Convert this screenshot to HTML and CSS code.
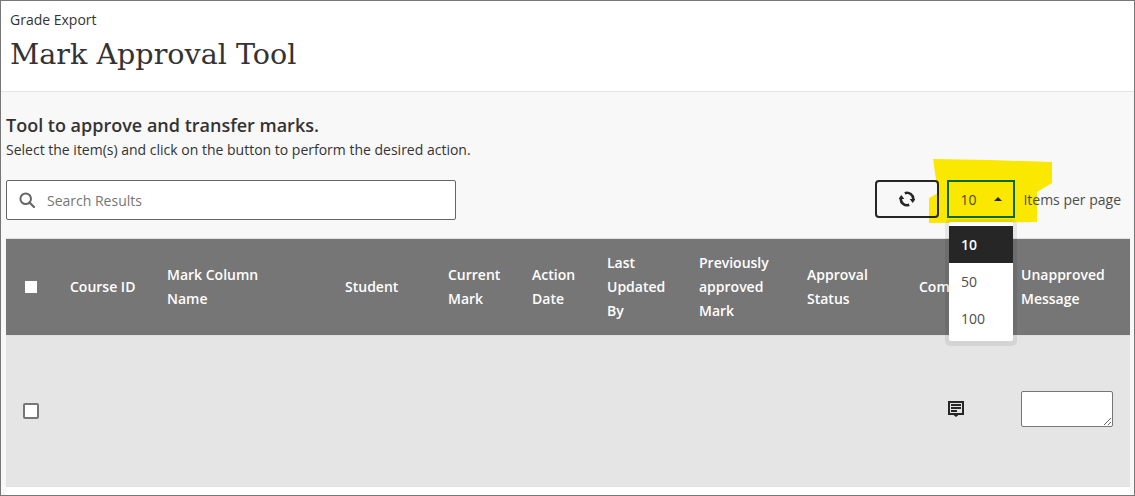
FILE: index.html
```html
<!DOCTYPE html>
<html lang="en">
<head>
<meta charset="utf-8">
<title>Mark Approval Tool</title>
<link rel="stylesheet" href="styles.css">
</head>
<body>
<div class="frame">
  <header class="head">
    <div class="crumb">Grade Export</div>
    <h1 class="title">Mark Approval Tool</h1>
  </header>
  <main class="content">
    <h2 class="lead">Tool to approve and transfer marks.</h2>
    <p class="sub">Select the item(s) and click on the button to perform the desired action.</p>
    <div class="toolbar">
      <div class="search">
        <svg class="search-icon" viewBox="0 0 16 16" width="16" height="16"><circle cx="6.700" cy="6.700" r="5.300" fill="none" stroke="#666" stroke-width="2"/><path d="M10.700 10.700 L15 15" stroke="#666" stroke-width="2.200" stroke-linecap="round"/></svg>
        <span class="placeholder">Search Results</span>
      </div>
      <div class="controls">
        <button class="refresh" type="button" aria-label="Refresh">
          <svg viewBox="0 0 16 16" width="16" height="16"><path d="M5.800 2.200 A6.200 6.200 0 0 1 14.200 8.500" fill="none" stroke="#262626" stroke-width="2.600"/><path d="M10.700 8 L16.500 8 L13.700 12 Z" fill="#262626"/><path d="M10.200 13.800 A6.200 6.200 0 0 1 1.800 7.500" fill="none" stroke="#262626" stroke-width="2.600"/><path d="M5.300 8 L-0.500 8 L2.300 4 Z" fill="#262626"/></svg>
        </button>
        <div class="select"><span>10</span><i class="caret"></i></div>
        <span class="per-page">Items per page</span>
      </div>
    </div>
    <div class="grid">
      <div class="row row-head">
        <div class="cell cell-check"><i class="check-head"></i></div>
        <div class="cell">Course ID</div>
        <div class="cell">Mark Column<br>Name</div>
        <div class="cell">Student</div>
        <div class="cell">Current<br>Mark</div>
        <div class="cell">Action<br>Date</div>
        <div class="cell">Last<br>Updated<br>By</div>
        <div class="cell">Previously<br>approved<br>Mark</div>
        <div class="cell">Approval<br>Status</div>
        <div class="cell">Comments</div>
        <div class="cell">Unapproved<br>Message</div>
      </div>
      <div class="row row-body">
        <div class="cell cell-check"><i class="check"></i></div>
        <div class="cell"></div><div class="cell"></div><div class="cell"></div><div class="cell"></div>
        <div class="cell"></div><div class="cell"></div><div class="cell"></div><div class="cell"></div>
        <div class="cell cell-comment">
          <svg viewBox="0 0 16 16" width="16" height="16"><path d="M0 0 H16 V14 H10.500 L8 16 L5.500 14 H0 Z" fill="#262626"/><rect x="2" y="2" width="12" height="10" fill="#e5e5e5"/><rect x="3" y="3" width="10" height="2" fill="#262626"/><rect x="3" y="6" width="10" height="2" fill="#262626"/><rect x="3" y="9" width="6" height="2" fill="#262626"/></svg>
        </div>
        <div class="cell"><textarea class="message" aria-label="Unapproved message"></textarea></div>
      </div>
    </div>
    <div class="grid-end"></div>
  </main>
  <svg class="marker" viewBox="0 0 1135 496" width="1135" height="496" aria-hidden="true"><path d="M933 159 L990 160 L1052 162 L1052 183 L1037 192 L1037 222 L929 223 L929 198 L938 193 Z" fill="#fae800"/></svg>
  <ul class="menu">
    <li class="opt opt-on">10</li>
    <li class="opt">50</li>
    <li class="opt">100</li>
  </ul>
</div>
</body>
</html>
```

FILE: styles.css
```css
* { box-sizing: border-box; }
html, body { margin: 0; height: 100%; }
body {
  font-family: "Open Sans", "Liberation Sans", sans-serif;
  color: #333;
  font-size: 14px;
  overflow: hidden;
}
.frame {
  position: relative;
  height: 496px;
  border: 1px solid #777;
  display: flex;
  flex-direction: column;
  background: #f8f8f8;
  overflow: hidden;
}
.head {
  height: 91px;
  flex: none;
  background: #fff;
  border-bottom: 1px solid #e5e5e5;
  padding: 9px 9px 0;
}
.crumb { font-size: 14px; line-height: 20px; }
.title {
  margin: 6px 0 0;
  font-family: "DejaVu Serif", "Liberation Serif", serif;
  font-weight: 400;
  font-size: 28.600px;
  line-height: 36px;
  color: #333;
}
.content { flex: 1; padding: 21px 4px 0 5px; min-height: 0; }
.lead { margin: 0; font-size: 18px; font-weight: 600; line-height: 24px; }
.sub { margin: 1px 0 0; font-size: 14px; line-height: 24px; }
.toolbar {
  display: flex;
  justify-content: space-between;
  align-items: flex-start;
  margin-top: 18px;
  height: 58px;
  padding-right: 9px;
}
.search {
  width: 450px;
  height: 40px;
  background: #fff;
  border: 1px solid #666;
  border-radius: 2px;
  display: flex;
  align-items: center;
  gap: 12px;
  padding-left: 12px;
}
.placeholder { color: #767676; font-size: 14px; }
.controls { display: flex; align-items: flex-start; position: relative; z-index: 2; }
.refresh {
  width: 64px;
  height: 38px;
  background: transparent;
  border: 2px solid #262626;
  border-radius: 4px;
  padding: 0;
  display: flex;
  align-items: center;
  justify-content: center;
}
.select {
  width: 68px;
  height: 38px;
  margin-left: 8px;
  border: 2px solid #0b6b1a;
  display: flex;
  align-items: center;
  justify-content: space-between;
  padding: 0 11px;
  font-size: 14px;
  color: #4a4a20;
}
.caret {
  width: 0;
  height: 0;
  border-left: 4px solid transparent;
  border-right: 4px solid transparent;
  border-bottom: 4px solid #262626;
}
.per-page { margin-left: 8px; line-height: 39px; color: #4d4d4d; font-size: 14px; }
.grid { width: 1124px; border-top: 1px solid #e0e0e0; }
.row {
  display: grid;
  grid-template-columns: 64px 97px 178px 103px 84px 75px 92px 108px 112px 102px 109px;
  align-items: center;
}
.row-head {
  background: #767676;
  color: #fff;
  font-weight: 600;
  font-size: 14px;
  line-height: 24px;
  height: 96px;
}
.row-body {
  background: #e5e5e5;
  height: 151px;
  border-top: 1px solid #e0e0e0;
}
.cell-check { display: flex; justify-content: center; width: 50px; }
.check-head { width: 12px; height: 12px; background: #fff; display: block; }
.check {
  width: 16px;
  height: 16px;
  display: block;
  background: #fff;
  border: 2px solid #767676;
  border-radius: 2px;
}
.cell-comment { padding-left: 29px; display: flex; height: 16px; margin-top: -4px; }
.message {
  display: block;
  width: 92px;
  height: 36px;
  background: #fff;
  border: 1px solid #767676;
  border-radius: 2px;
  margin: 0 0 5px;
  padding: 0;
}
.grid-end { width: 1124px; height: 9px; background: #fff; border-top: 1px solid #e0e0e0; }
.marker { position: absolute; left: -1px; top: -1px; pointer-events: none; z-index: 1; }
.menu {
  position: absolute;
  left: 948px;
  top: 221px;
  width: 64px;
  height: 119px;
  margin: 0;
  padding: 4px 0;
  list-style: none;
  background: #fff;
  box-shadow: 0 1px 0 4px rgba(0, 0, 0, 0.07);
  z-index: 3;
  border-radius: 2px;
}
.opt {
  height: 37px;
  line-height: 37px;
  padding-left: 12px;
  font-size: 14px;
  color: #4d4d4d;
}
.opt-on { background: #262626; color: #fff; font-weight: 600; }
```
